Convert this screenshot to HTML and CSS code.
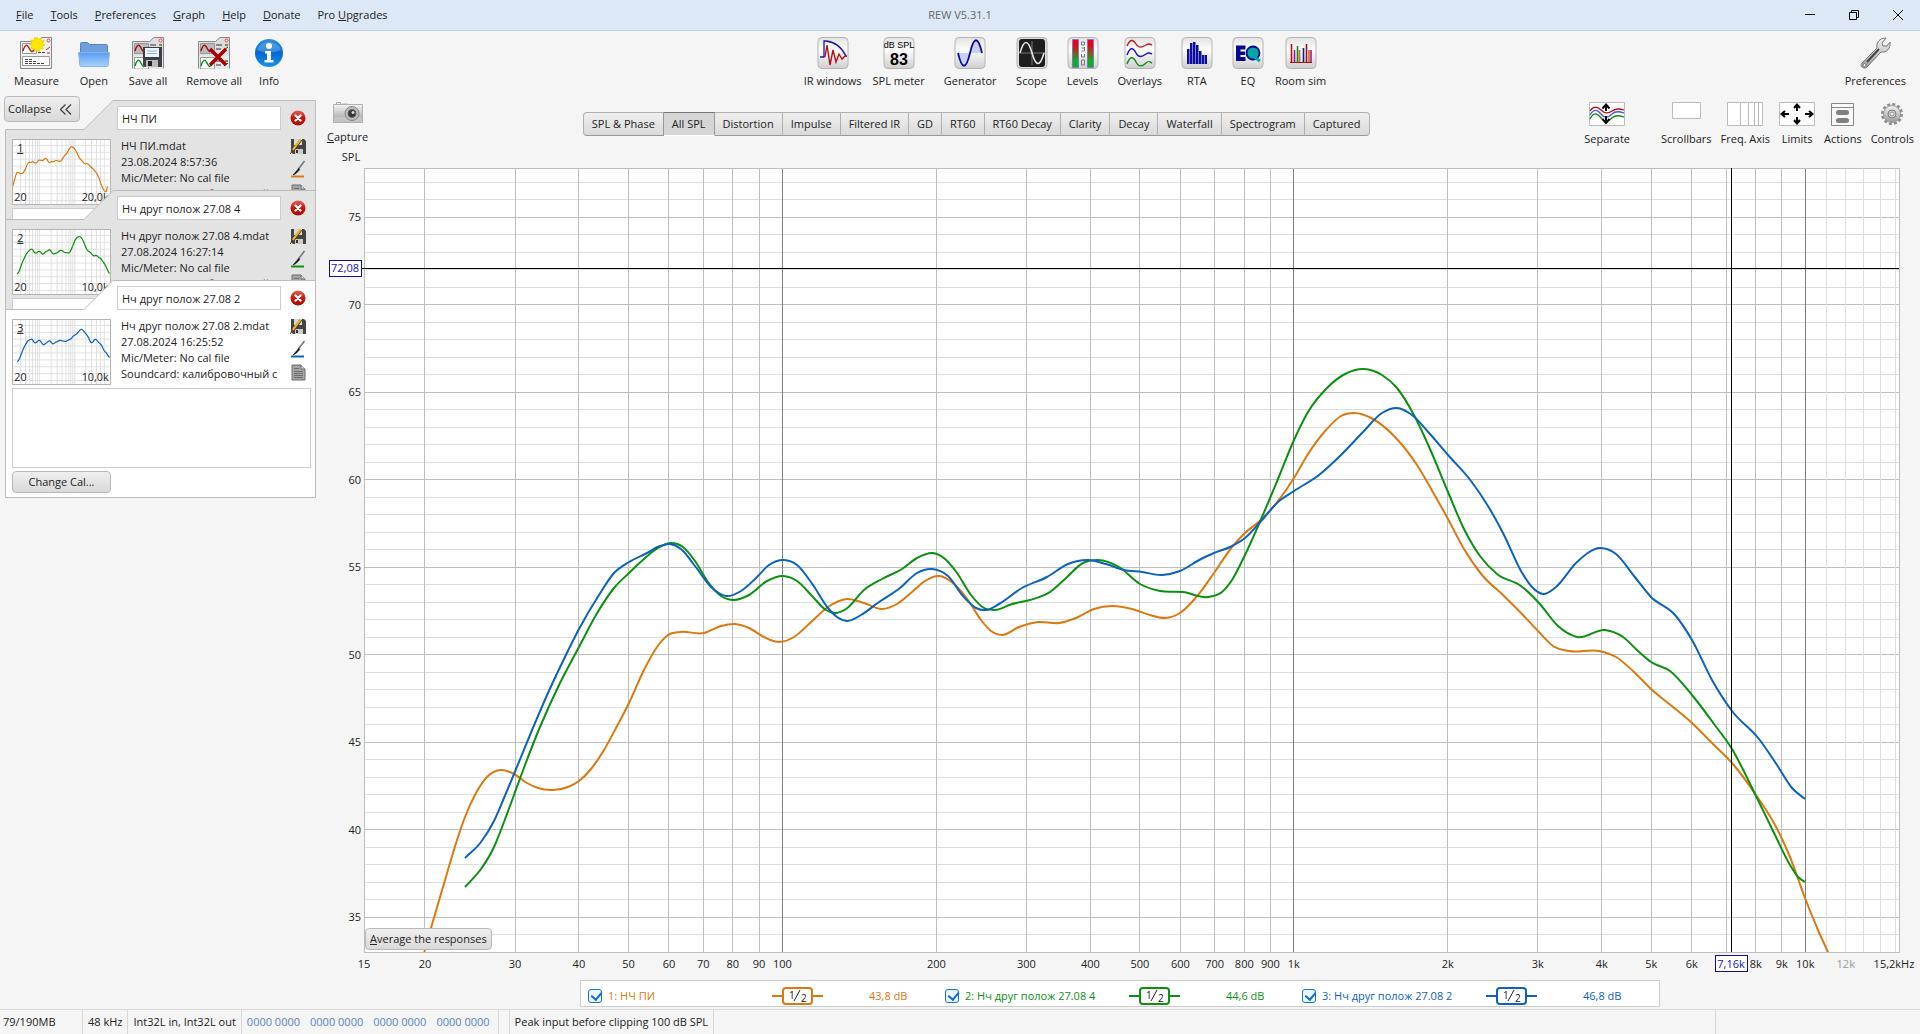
FILE: index.html
```html
<!DOCTYPE html>
<html lang="en">
  <head>
    <meta charset="UTF-8">
    <link rel="stylesheet" href="styles.css">
    <title>REW V5.31.1</title>
  </head>
  <body>
    <svg class="defs" aria-hidden="true">
      <defs>
        <linearGradient id="tile" x1="0" y1="0" x2="0" y2="1"><stop offset="0" stop-color="#e2e2e2"/><stop offset=".4" stop-color="#fdfdfd"/><stop offset="1" stop-color="#cfcfcf"/></linearGradient>
        <linearGradient id="level" x1="0" y1="0" x2="0" y2="1"><stop offset=".2" stop-color="#f00010"/><stop offset=".75" stop-color="#0fae20"/></linearGradient>
        <linearGradient id="folder" x1="0" y1="0" x2="0" y2="1"><stop offset="0" stop-color="#5b9cf0"/><stop offset="1" stop-color="#a9d2ff"/></linearGradient>
        <linearGradient id="info" x1="0" y1="0" x2="0" y2="1"><stop offset="0" stop-color="#2f8de0"/><stop offset=".5" stop-color="#0568cf"/><stop offset="1" stop-color="#1592f0"/></linearGradient>
        <linearGradient id="steel" x1="0" y1="0" x2="0" y2="1"><stop offset="0" stop-color="#f4f4f4"/><stop offset="1" stop-color="#9a9a9a"/></linearGradient>
        <linearGradient id="redball" x1="0" y1="0" x2="0" y2="1"><stop offset="0" stop-color="#e4635a"/><stop offset=".5" stop-color="#c81408"/><stop offset="1" stop-color="#a50d05"/></linearGradient>
        <symbol id="i-sheets" viewBox="0 0 32 32">
          <path d="M.5 31.5V4.500h17L22 .5h9.500v31" fill="#ddd" stroke="#888"/>
          <path d="M2.500 6.500h14v10h-14z" fill="#bbb" stroke="#999"/>
          <path d="M3 14c2-7 4-7 6-3s3 5 5 1" fill="none" stroke="#a00a14" stroke-width="1.500"/>
          <path d="M1 18.500h30V32H1z" fill="#e8e8e8"/>
          <path d="M2.500 20.500h14V32h-14z" fill="#fff" stroke="#999"/>
          <path d="M3 29c2-7 4-7 6-3s3 5 5 1" fill="none" stroke="#0a8a28" stroke-width="1.500"/>
          <path d="M18 8h6M18 12h5M18 24h6M18 28h5" stroke="#333"/>
          <circle cx="28.500" cy="3.500" r="1.500" fill="#fff" stroke="#e33"/><path d="M27 7h3v2h-3zM27 23h3v2h-3z" fill="#883" />
          <path d="M26 13l4-3M26 29l4-3" stroke="#333"/>
        </symbol>
        <symbol id="i-close" viewBox="0 0 16 16">
          <circle cx="8" cy="8" r="7.500" fill="url(#redball)"/>
          <path d="M5.500 5.500l5 5M10.500 5.500l-5 5" stroke="#fff" stroke-width="2.400" stroke-linecap="round"/>
        </symbol>
        <symbol id="i-save" viewBox="0 0 16 16">
          <path d="M1 1h13l2 2v13H3l-2-2z" fill="#444"/><path d="M4 1h8v6H4z" fill="#d8d8d8"/><path d="M5 11h8v5H5z" fill="#ccc"/><path d="M6 12h2v3H6z" fill="#333"/>
          <path d="M10.500 1.500L3 12" stroke="#e0b030" stroke-width="2.400"/><path d="M12 2L4 13M3 12l-3 4" stroke="#5a3a08"/>
        </symbol>
        <symbol id="i-brush" viewBox="0 0 16 18">
          <path d="M14.500 1L8 9.500" stroke="#777" stroke-width="1.600"/><path d="M8.700 8.500L3 15l3-1.500 3.800-4z" fill="#111" stroke="#111" stroke-width=".6"/>
          <path d="M1 15.500h13v2H1z" fill="currentColor"/>
        </symbol>
        <symbol id="i-doc" viewBox="0 0 15 17">
          <path d="M1 1h9l4 4v11H1z" fill="#a6a6a6" stroke="#6c6c6c"/><path d="M10 1v4h4" fill="#ddd" stroke="#6c6c6c"/>
          <path d="M3 4.500h5M3 7.500h9M3 9.500h9M3 11.500h9M3 13.500h9" stroke="#6c6c6c"/>
        </symbol>
      </defs>
    </svg>

    <header class="titlebar">
      <nav class="menu">
        <button><u>F</u>ile</button>
        <button><u>T</u>ools</button>
        <button><u>P</u>references</button>
        <button><u>G</u>raph</button>
        <button><u>H</u>elp</button>
        <button><u>D</u>onate</button>
        <button>Pro <u>U</u>pgrades</button>
      </nav>
      <span class="title">REW V5.31.1</span>
      <div class="window-buttons">
        <button aria-label="Minimize"><svg width="12" height="12" viewBox="0 0 12 12"><path d="M1 5.500h10"/></svg></button>
        <button aria-label="Restore"><svg width="12" height="12" viewBox="0 0 12 12"><path d="M1.500 3.500h7v7h-7zM3.500 3V1.500h7v7H9"/></svg></button>
        <button aria-label="Close"><svg width="12" height="12" viewBox="0 0 12 12"><path d="M1 1l10 10M11 1L1 11"/></svg></button>
      </div>
    </header>

    <div class="toolbar">
      <div class="tools">
        <button class="tool">
          <svg viewBox="0 0 32 32"><path d="M.5 31.500V4.500h17L22 .5h9.500v31z" fill="#f2f2f2" stroke="#888"/><path d="M2.500 6.500h14v10h-14zM2.500 19.500h27v9h-27z" fill="#fff" stroke="#999"/><path d="M3 14c2-7 4-7 6-3s3 5 6 1" fill="none" stroke="#c0141c" stroke-width="1.500"/><path d="M5 22.500h8M5 24.500h12M5 26.500h19M18 15.500h7" stroke="#444" stroke-dasharray="3 1"/><circle cx="28.500" cy="3.500" r="1.500" fill="#fff" stroke="#e33"/><path d="M26 13l4-3M27 16h3" stroke="#a33"/><path d="M16.500 0l1.500 2.500 3-1.500v3l3-.5-1.500 3 2 1.500-2.500 1 1 3-3-.5-.500 3-2.500-2-2 2-1-3-3 .5 1-3-2.500-1.500 2.500-1.500-1-3 3 .5.500-3 2 1.500z" fill="#ffe800" stroke="#f7d000"/></svg>
          <span>Measure</span>
        </button>
        <button class="tool">
          <svg viewBox="0 0 32 32"><path d="M2.500 16V6.500q0-1 1-1h6l2 2h17q1 0 1 1V16z" fill="#6f9fdc" stroke="#5585c8"/><path d="M.5 15.500h31l-1.500 13q0 1-1 1H3q-1 0-1-1z" fill="url(#folder)" stroke="#7fb2f2"/></svg>
          <span>Open</span>
        </button>
        <button class="tool">
          <svg viewBox="0 0 32 32"><use href="#i-sheets"/><path d="M11 10h18l1 1v19H13l-2-2z" fill="#3c3f45"/><path d="M13 11h14v9H13z" fill="#eef4fc"/><path d="M15 14h10M15 16.500h10" stroke="#8fb4e0"/><path d="M14 23h12v7H14z" fill="#bbb"/><path d="M16 24h4v5h-4z" fill="#222"/></svg>
          <span>Save all</span>
        </button>
        <button class="tool">
          <svg viewBox="0 0 32 32"><use href="#i-sheets"/><path d="M12 12l16 16M28 12L12 28" stroke="#a80008" stroke-width="3.500"/></svg>
          <span>Remove all</span>
        </button>
        <button class="tool tool-last">
          <svg viewBox="0 0 32 32"><circle cx="16" cy="16" r="14" fill="url(#info)"/><path d="M4 13a12.500 11 0 0 1 24 0q-12 5-24 0z" fill="#fff" opacity=".2"/><circle cx="16" cy="9" r="3" fill="#fff"/><path d="M12 14h6v9h2.500v2.500h-9V23H14v-6.500h-2z" fill="#fff"/></svg>
          <span>Info</span>
        </button>
      </div>

      <div class="tools">
        <button class="tool tool-first">
          <svg viewBox="0 0 32 32"><rect x="1" y=".5" width="30" height="31" rx="4" fill="url(#tile)" stroke="#b4b4b4"/><path d="M3 20h4V4h2c10 1 16 7 20 15v1" fill="none" stroke="#1818b0" stroke-width="1.300"/><path d="M8 20l2-12 3 20 3-15 3 12 3-8 3 5 3-3h2" fill="none" stroke="#b01018" stroke-width="1.400"/></svg>
          <span>IR windows</span>
        </button>
        <button class="tool">
          <svg viewBox="0 0 32 32"><rect x="1" y=".5" width="30" height="31" rx="4" fill="url(#tile)" stroke="#b4b4b4"/><text x="16" y="11" class="t-small">dB SPL</text><text x="16" y="28" class="t-big">83</text></svg>
          <span>SPL meter</span>
        </button>
        <button class="tool">
          <svg viewBox="0 0 32 32"><rect x="1" y=".5" width="30" height="31" rx="4" fill="url(#tile)" stroke="#b4b4b4"/><path d="M4 16h12c-4 17-8 17-12 0zM16 16h12c-4-17-8-17-12 0z" fill="#ccd0f0"/><path d="M4 16c4 17 8 17 12 0s8-17 12 0" fill="none" stroke="#0c0c9c" stroke-width="1.800"/></svg>
          <span>Generator</span>
        </button>
        <button class="tool">
          <svg viewBox="0 0 32 32"><rect x="1" y=".5" width="30" height="31" rx="4" fill="#ddd" stroke="#b4b4b4"/><rect x="3" y="2" width="26" height="28" rx="3" fill="#1e1e1e"/><path d="M3 16h26M16 4v24" stroke="#777"/><path d="M4 16c4-14 8-14 12 0s8 14 12 0" fill="none" stroke="#e4e4e4" stroke-width="1.600"/></svg>
          <span>Scope</span>
        </button>
        <button class="tool">
          <svg viewBox="0 0 32 32"><rect x="1" y=".5" width="30" height="31" rx="4" fill="url(#tile)" stroke="#b4b4b4"/><path d="M5.500 2.500h6v28h-6zM20.500 2.500h6v28h-6z" fill="url(#level)" stroke="#7a7ac8"/><path d="M14.500 5h3v3h-3zM14.500 11h3M17.500 10v4h-3M14.500 17v3h3v-3M14.500 23h3v5h-3z" fill="none" stroke="#777"/></svg>
          <span>Levels</span>
        </button>
        <button class="tool">
          <svg viewBox="0 0 32 32"><rect x="1" y=".5" width="30" height="31" rx="4" fill="url(#tile)" stroke="#b4b4b4"/><g fill="none" stroke-width="1.400"><path d="M3 9c3-7 6-7 9-2s7 3 10 1 4-1 6 0" stroke="#c01820"/><path d="M3 18c3-8 6-8 9-2s7 3 10 1 4-1 6 0" stroke="#1818b0"/><path d="M3 27c3-8 6-8 9-2s7 4 10 1 4-1 6 0" stroke="#108c18"/></g></svg>
          <span>Overlays</span>
        </button>
        <button class="tool">
          <svg viewBox="0 0 32 32"><rect x="1" y=".5" width="30" height="31" rx="4" fill="url(#tile)" stroke="#b4b4b4"/><path d="M6 12h2.500v15H6zM9 6h2.500v21H9zM12 5h2.500v22H12zM15 8h2.500v19H15zM18 14h2.500v13H18zM21 18h2.500v9H21zM24 18h2v9h-2z" fill="#0c0ca0"/></svg>
          <span>RTA</span>
        </button>
        <button class="tool">
          <svg viewBox="0 0 32 32"><rect x="1" y=".5" width="30" height="31" rx="4" fill="url(#tile)" stroke="#b4b4b4"/><path d="M4 8.500h9.500v4H8.500v2h4.500v3.500H8.500v2h5v4H4z" fill="#08088c"/><circle cx="21" cy="16" r="6.500" fill="#00a8a8" stroke="#08088c" stroke-width="1.800"/><path d="M22 20l6 4" stroke="#00a8a8" stroke-width="3"/></svg>
          <span>EQ</span>
        </button>
        <button class="tool tool-last">
          <svg viewBox="0 0 32 32"><rect x="1" y=".5" width="30" height="31" rx="4" fill="url(#tile)" stroke="#b4b4b4"/><g stroke-width="1.600"><path d="M6.500 7v18" stroke="#b01018"/><path d="M9.500 13v12" stroke="#981a98"/><path d="M12.500 9v16" stroke="#108c18"/><path d="M14.500 13v12" stroke="#b87818"/><path d="M18.500 11v14" stroke="#1818b0"/><path d="M21.500 7v18" stroke="#a01018"/><path d="M24 13v12" stroke="#b87818"/><path d="M26 13v12" stroke="#981a98"/></g><path d="M5 25.500h22" stroke="#b01018"/></svg>
          <span>Room sim</span>
        </button>
      </div>

      <div class="tools tools-right">
        <button class="tool">
          <svg viewBox="0 0 32 32"><path d="M3 26L18 11C17 5 21 1 27 1l-4 5 1 3 4 0 3-4c1 7-4 11-9 10L8 30c-3 3-8-1-5-4z" fill="url(#steel)" stroke="#777"/><path d="M8 25L20 12" stroke="#444" stroke-width="2"/><circle cx="5.500" cy="28" r="1.500" fill="#f4f4f4" stroke="#777"/></svg>
          <span>Preferences</span>
        </button>
      </div>
    </div>

    <div class="workspace">
      <aside class="sidebar">
        <button class="push collapse">Collapse <svg width="12" height="11" viewBox="0 0 12 11"><path d="M5.500 .5l-5 5 5 5M11 .5l-5 5 5 5"/></svg></button>

        <section class="card card-1">
          <svg class="card-shape" preserveAspectRatio="none" viewBox="0 0 311 218"><path d="M.5 217.500V29.500H79L108 .5H310.500V217.500z"/></svg>
          <div class="card-head">
            <input type="text" aria-label="Measurement name" value="НЧ ПИ">
            <button aria-label="Remove"><svg width="16" height="16"><use href="#i-close"/></svg></button>
          </div>
          <div class="card-info">
            <svg class="thumb" viewBox="0 0 98 65" data-curve="0" data-from="20" data-to="20,0k" data-n="1"></svg>
            <p>НЧ ПИ.mdat<br>23.08.2024 8:57:36<br>Mic/Meter: No cal file<br>Soundcard: калибровочный с</p>
            <div class="card-icons">
              <button aria-label="Save"><svg width="16" height="16"><use href="#i-save"/></svg></button>
              <button aria-label="Colour" class="c1"><svg width="16" height="18"><use href="#i-brush"/></svg></button>
              <button aria-label="Notes"><svg width="15" height="17"><use href="#i-doc"/></svg></button>
            </div>
          </div>
          <textarea aria-label="Notes"></textarea>
          <button class="push change-cal">Change Cal...</button>
        </section>

        <section class="card card-2">
          <svg class="card-shape" preserveAspectRatio="none" viewBox="0 0 311 218"><path d="M.5 217.500V29.500H79L108 .5H310.500V217.500z"/></svg>
          <div class="card-head">
            <input type="text" aria-label="Measurement name" value="Нч друг полож 27.08 4">
            <button aria-label="Remove"><svg width="16" height="16"><use href="#i-close"/></svg></button>
          </div>
          <div class="card-info">
            <svg class="thumb" viewBox="0 0 98 65" data-curve="1" data-from="20" data-to="10,0k" data-n="2"></svg>
            <p>Нч друг полож 27.08 4.mdat<br>27.08.2024 16:27:14<br>Mic/Meter: No cal file<br>Soundcard: калибровочный с</p>
            <div class="card-icons">
              <button aria-label="Save"><svg width="16" height="16"><use href="#i-save"/></svg></button>
              <button aria-label="Colour" class="c2"><svg width="16" height="18"><use href="#i-brush"/></svg></button>
              <button aria-label="Notes"><svg width="15" height="17"><use href="#i-doc"/></svg></button>
            </div>
          </div>
          <textarea aria-label="Notes"></textarea>
          <button class="push change-cal">Change Cal...</button>
        </section>

        <section class="card card-3 selected">
          <svg class="card-shape" preserveAspectRatio="none" viewBox="0 0 311 218"><path d="M.5 217.500V29.500H79L108 .5H310.500V217.500z"/></svg>
          <div class="card-head">
            <input type="text" aria-label="Measurement name" value="Нч друг полож 27.08 2">
            <button aria-label="Remove"><svg width="16" height="16"><use href="#i-close"/></svg></button>
          </div>
          <div class="card-info">
            <svg class="thumb" viewBox="0 0 98 65" data-curve="2" data-from="20" data-to="10,0k" data-n="3"></svg>
            <p>Нч друг полож 27.08 2.mdat<br>27.08.2024 16:25:52<br>Mic/Meter: No cal file<br>Soundcard: калибровочный с</p>
            <div class="card-icons">
              <button aria-label="Save"><svg width="16" height="16"><use href="#i-save"/></svg></button>
              <button aria-label="Colour" class="c3"><svg width="16" height="18"><use href="#i-brush"/></svg></button>
              <button aria-label="Notes"><svg width="15" height="17"><use href="#i-doc"/></svg></button>
            </div>
          </div>
          <textarea aria-label="Notes"></textarea>
          <button class="push change-cal">Change Cal...</button>
        </section>
      </aside>

      <main class="graph">
        <div class="graph-head">
          <div class="capture-col">
            <button class="capture">
              <svg width="30" height="22" viewBox="0 0 30 22"><path d="M3.500 2V.5h4V2M9.500 2h5" fill="none" stroke="#aaa"/><path d="M.5 2.500h29v18H.5z" fill="url(#steel)" stroke="#b0b0b0"/><path d="M1 15h28v5H1z" fill="#c4c4c4"/><circle cx="19" cy="11.500" r="7" fill="#bbb" stroke="#888"/><circle cx="19" cy="11.500" r="4" fill="#333" stroke="#666"/><circle cx="20" cy="10.500" r="1.500" fill="#ddd"/></svg>
              <span><u>C</u>apture</span>
            </button>
            <span class="spl">SPL</span>
          </div>
          <div class="tabs">
            <button>SPL &amp; Phase</button>
            <button class="active">All SPL</button>
            <button>Distortion</button>
            <button>Impulse</button>
            <button>Filtered IR</button>
            <button>GD</button>
            <button>RT60</button>
            <button>RT60 Decay</button>
            <button>Clarity</button>
            <button>Decay</button>
            <button>Waterfall</button>
            <button>Spectrogram</button>
            <button>Captured</button>
          </div>
          <div class="graph-tools">
            <button class="separate">
              <svg width="36" height="24" viewBox="0 0 36 24"><path d="M.5 .5h35v23H.5z" fill="#fff" stroke="#bbb"/><g fill="none" stroke-width="1.300"><path d="M1 9c4-6 8-4 11-1s7 4 11 1 9-2 12-1" stroke="#b01018"/><path d="M1 13c4-7 8-5 11-1s7 4 11 0 9-2 12-1" stroke="#5a50c8"/><path d="M1 17c4-8 8-5 11-1s7 4 11 0 9-2 12-1" stroke="#108c18"/></g><path d="M17 9V3M13.500 6.500L17 2.500l3.500 4M17 14v6M13.500 17l3.500 4 3.500-4" fill="none" stroke="#000" stroke-width="2"/></svg>
              <span>Separate</span>
            </button>
            <button>
              <svg width="29" height="24" viewBox="0 0 29 24"><path d="M.5 .5h28v16H.5z" fill="#fff" stroke="#bbb"/></svg>
              <span>Scrollbars</span>
            </button>
            <button>
              <svg width="36" height="24" viewBox="0 0 36 24"><path d="M.5 .5h35v23H.5z" fill="#fff" stroke="#bbb"/><path d="M13.500 1v22M21.500 1v22M27.500 1v22M31.500 1v22" stroke="#bbb"/></svg>
              <span>Freq. Axis</span>
            </button>
            <button>
              <svg width="36" height="24" viewBox="0 0 36 24"><path d="M.5 .5h35v23H.5z" fill="#fff" stroke="#bbb"/><path d="M18 9V3M15 6l3-3.500L21 6M18 15v6M15 18l3 3.500 3-3.500M10 12H3M6 9l-3.500 3L6 15M26 12h7M30 9l3.500 3-3.500 3" fill="none" stroke="#000" stroke-width="2"/></svg>
              <span>Limits</span>
            </button>
            <button>
              <svg width="24" height="24" viewBox="0 0 24 24"><path d="M.5 1.500h22v22H.5zM.5 5.500h22" fill="#f8f8f8" stroke="#888"/><rect x="5" y="8" width="13" height="5" rx="2.500" fill="#808080"/><rect x="5" y="16" width="13" height="5" rx="2.500" fill="#808080"/></svg>
              <span>Actions</span>
            </button>
            <button>
              <svg width="24" height="24" viewBox="0 0 24 24"><circle cx="12" cy="12" r="9.500" fill="none" stroke="#8c8c8c" stroke-width="3" stroke-dasharray="2.900 2.070"/><circle cx="12" cy="12" r="8.500" fill="url(#steel)" stroke="#999"/><circle cx="12" cy="12" r="4" fill="#ddd" stroke="#777"/><circle cx="12" cy="12" r="2" fill="#f4f4f4" stroke="#888"/></svg>
              <span>Controls</span>
            </button>
          </div>
        </div>

        <div class="plot">
          <svg id="plot"></svg>
          <button class="push average"><u>A</u>verage the responses</button>
        </div>

        <div class="legend">
          <div class="legend-item c1">
            <input type="checkbox" id="trace1" checked>
            <label for="trace1">1: НЧ ПИ</label>
            <svg class="smoothing" viewBox="0 0 51 18"><path d="M0 9h11M40 9h11"/><rect x="11" y="1" width="29" height="16" rx="3"/><text x="17" y="12">1</text><path class="slash" d="M22 14l6-11"/><text x="29" y="15">2</text></svg>
            <output>43,8 dB</output>
          </div>
          <div class="legend-item c2">
            <input type="checkbox" id="trace2" checked>
            <label for="trace2">2: Нч друг полож 27.08 4</label>
            <svg class="smoothing" viewBox="0 0 51 18"><path d="M0 9h11M40 9h11"/><rect x="11" y="1" width="29" height="16" rx="3"/><text x="17" y="12">1</text><path class="slash" d="M22 14l6-11"/><text x="29" y="15">2</text></svg>
            <output>44,6 dB</output>
          </div>
          <div class="legend-item c3">
            <input type="checkbox" id="trace3" checked>
            <label for="trace3">3: Нч друг полож 27.08 2</label>
            <svg class="smoothing" viewBox="0 0 51 18"><path d="M0 9h11M40 9h11"/><rect x="11" y="1" width="29" height="16" rx="3"/><text x="17" y="12">1</text><path class="slash" d="M22 14l6-11"/><text x="29" y="15">2</text></svg>
            <output>46,8 dB</output>
          </div>
        </div>
      </main>
    </div>

    <footer class="statusbar">
      <span class="memory">79/190MB</span>
      <span>48 kHz</span>
      <span>Int32L in, Int32L out</span>
      <span class="bits"><i>0000 0000</i><i>0000 0000</i><i>0000 0000</i><i>0000 0000</i></span>
      <span class="spacer"></span>
      <span>Peak input before clipping 100 dB SPL</span>
      <span class="rest"></span>
      <span class="end"></span>
    </footer>

    <script src="script.js"></script>
  </body>
</html>
```
FILE: styles.css
```css
* {
    box-sizing: border-box;
}

body {
    margin: 0;
    min-height: 100vh;
    display: flex;
    flex-direction: column;
    background: #f5f5f5;
    color: #222;
    font: 11px/16px "Open Sans", "Noto Sans", sans-serif;
}

button {
    font: inherit;
    color: inherit;
    background: none;
    border: none;
    padding: 0;
    white-space: nowrap;
}

svg {
    display: block;
}

.defs {
    position: absolute;
    width: 0;
    height: 0;
}

.c1 { color: #dc7810; }
.c2 { color: #0c9010; }
.c3 { color: #0c62bc; }

/* title bar */
.titlebar {
    display: grid;
    grid-template-columns: 1fr auto 1fr;
    align-items: center;
    height: 31px;
    background: #dce8f6;
    border-bottom: 1px solid #c0d0e0;
}

.menu {
    display: flex;
    gap: 17px;
    padding-left: 16px;
}

.title {
    color: #666;
}

.window-buttons {
    display: flex;
    justify-content: flex-end;
    gap: 32px;
    padding-right: 16px;
}

.window-buttons path {
    fill: none;
    stroke: #000;
}

/* toolbar */
.toolbar {
    display: flex;
    justify-content: space-between;
    height: 65px;
    padding: 6px 14px 0;
}

.tools {
    display: flex;
    align-items: flex-start;
    gap: 19px;
}

.tool {
    display: flex;
    flex-direction: column;
    align-items: center;
    gap: 4px;
}

.tool svg {
    width: 32px;
    height: 32px;
}

.tool-first {
    margin-right: -8px;
}

.tool-last {
    margin-left: -8px;
}

.t-small,
.t-big {
    font-family: "Liberation Sans", sans-serif;
    font-size: 9px;
    text-anchor: middle;
}

.t-big {
    font-size: 16px;
    font-weight: bold;
}

.push {
    background: linear-gradient(#efefef, #d9d9d9);
    border: 1px solid #b9b9b9;
    border-radius: 4px;
}

.workspace {
    flex: 1;
    display: flex;
}

/* measurement list */
.sidebar {
    width: 320px;
    padding-left: 4px;
}

.collapse {
    position: relative;
    z-index: 1;
    display: flex;
    align-items: center;
    gap: 9px;
    height: 26px;
    padding: 0 7px 0 3px;
}

.collapse path {
    fill: none;
    stroke: #444;
    stroke-width: 1.300;
}

.card {
    position: relative;
    width: 311px;
    height: 218px;
    margin: -128px 0 0 1px;
}

.card-1 {
    margin-top: -22px;
}

.card-shape {
    position: absolute;
    width: 100%;
    height: 100%;
    fill: #e3e3e3;
    stroke: #bcbcbc;
}

.selected .card-shape {
    fill: #fff;
}

.card-head,
.card-info,
.card textarea,
.change-cal {
    position: relative;
}

.card-head {
    display: flex;
    align-items: center;
    gap: 9px;
    padding: 6px 0 0 112px;
}

.card-head input {
    width: 164px;
    height: 24px;
    padding: 0 4px;
    border: 1px solid #ccc;
    background: #fff;
    color: #222;
    font: inherit;
}

.card-info {
    display: grid;
    grid-template-columns: 99px 158px 18px;
    gap: 10px;
    height: 78px;
    padding: 8px 7px 0;
}

.thumb {
    width: 99px;
    height: 66px;
    margin-top: 1px;
    border: 1px solid #b4b4b4;
    background: #fff;
}

.thumb path {
    fill: none;
    stroke: #e0e0e0;
}

.thumb .curve {
    stroke: currentColor;
    stroke-width: 1.200;
}

.thumb text {
    fill: #222;
    font-size: 11px;
}

.card-info p {
    margin: 0;
    overflow: hidden;
    white-space: nowrap;
}

.card-icons {
    display: flex;
    flex-direction: column;
    align-items: center;
    gap: 6px;
}

.card textarea {
    display: block;
    width: 299px;
    height: 80px;
    margin-left: 7px;
    border: 1px solid #ccc;
    background: #fff;
    resize: none;
}

.change-cal {
    display: block;
    width: 99px;
    height: 22px;
    margin: 3px 0 0 7px;
}

/* graph */
.graph {
    flex: 1;
    display: flex;
    flex-direction: column;
    min-width: 0;
}

.graph-head {
    display: flex;
    height: 72px;
    padding: 6px 6px 0 7px;
}

.capture-col,
.capture {
    display: flex;
    flex-direction: column;
    align-items: center;
}

.capture {
    gap: 5px;
}

.spl {
    align-self: flex-end;
    margin-top: 4px;
    padding-right: 8px;
}

.tabs {
    flex: 1;
    display: flex;
    justify-content: center;
    align-items: flex-start;
    padding-top: 10px;
}

.tabs button {
    height: 24px;
    padding: 0 8px;
    background: linear-gradient(#efefef, #dadada);
    border: 1px solid #b0b0b0;
    border-left-width: 0;
    border-bottom-color: #999;
}

.tabs button:first-child {
    border-left-width: 1px;
    border-radius: 4px 0 0 4px;
}

.tabs button:last-child {
    border-radius: 0 4px 4px 0;
}

.tabs .active {
    background: #d6d6d6;
    border-color: #777 #999 #fff;
    box-shadow: -1px 0 #999;
}

.graph-tools {
    display: flex;
    align-items: flex-start;
    gap: 9px;
}

.graph-tools button {
    display: flex;
    flex-direction: column;
    align-items: center;
    gap: 5px;
}

.graph-tools .separate {
    margin-right: 22px;
}

.plot {
    position: relative;
    flex: 1;
    margin: 0 21px 28px 44px;
    background: #fff;
}

.plot > svg {
    position: absolute;
    width: 100%;
    height: 100%;
    overflow: visible;
}

.plot text {
    fill: #222;
    font-size: 11px;
    text-anchor: middle;
}

.plot .y-label {
    text-anchor: end;
}

.plot .dim {
    fill: #999;
}

.plot .cursor-text {
    fill: #1414c0;
}

.grid {
    stroke: #bebebe;
    shape-rendering: crispEdges;
}

.grid.minor {
    stroke: #dedede;
}

.grid.decade {
    stroke: #808080;
}

.cursor {
    stroke: #000;
    shape-rendering: crispEdges;
}

.frame {
    fill: none;
    stroke: #bebebe;
    shape-rendering: crispEdges;
}

.cursor-box {
    fill: #fff;
    stroke: #1010a0;
    shape-rendering: crispEdges;
}

.plot .curve {
    fill: none;
    stroke: currentColor;
    stroke-width: 2;
    vector-effect: non-scaling-stroke;
}

.average {
    position: absolute;
    left: 1px;
    bottom: 2px;
    height: 22px;
    padding: 0 4px;
}

/* legend */
.legend {
    align-self: center;
    display: grid;
    grid-template-columns: repeat(3, 357px);
    height: 27px;
    margin-bottom: 2px;
    padding: 4px 0 0 7px;
    background: #fff;
    border: 1px solid #ccc;
}

.legend-item {
    display: grid;
    grid-template-columns: 14px 158px 51px 1fr;
    align-items: center;
    column-gap: 6px;
}

.legend-item input {
    appearance: none;
    width: 14px;
    height: 14px;
    margin: 0;
    border: 1px solid #1474d0;
    border-radius: 3px;
    background: #eef6ff;
}

.legend-item input:checked::before {
    content: "";
    display: block;
    width: 5px;
    height: 8px;
    margin: 0 0 0 4px;
    border: solid #0c6cd0;
    border-width: 0 2px 2px 0;
    transform: rotate(40deg);
}

.legend-item output {
    padding-left: 40px;
}

.smoothing {
    width: 51px;
    height: 18px;
    fill: none;
    stroke: currentColor;
    stroke-width: 2;
}

.smoothing text {
    fill: #222;
    stroke: none;
    font-size: 10px;
}

.smoothing .slash {
    stroke: #222;
    stroke-width: 1;
}

/* status bar */
.statusbar {
    display: flex;
    height: 25px;
    border-top: 1px solid #d8d8d8;
    line-height: 24px;
}

.statusbar span {
    padding: 0 5px;
    border-right: 1px solid #d8d8d8;
    white-space: nowrap;
}

.statusbar .memory {
    width: 83px;
    padding-left: 3px;
}

.statusbar .bits {
    display: flex;
    gap: 10px;
    padding-right: 8px;
    color: #5b82c4;
}

.bits i {
    font-style: normal;
}

.statusbar .rest {
    flex: 1;
}

.statusbar .end {
    width: 204px;
    border: none;
}
```
FILE: script.js
```js
const SVG = "http://www.w3.org/2000/svg";
const FMIN = 15.2, FMAX = 15250, DBMAX = 77.82, DBMIN = 33.02;
const W = 1535, H = 784;

// trace points on a 1535 x 784 canvas
const traces = [
  [[56,800],[67,760],[79,719],[94,669],[101,649],[112,625],[124,608],[137,602],[150,606],[163,615],[174,620],[189,622],[204,619],[215,613],[227,601],[240,582],[252,560],[265,535],[280,502],[293,479],[304,467],[316,464],[340,465],[357,458],[371,456],[385,460],[400,469],[415,474],[430,469],[446,455],[464,439],[483,431],[500,435],[518,441],[533,436],[548,424],[561,413],[575,408],[589,415],[604,432],[617,452],[627,463],[638,467],[655,459],[674,454],[695,455],[712,450],[730,441],[748,438],[768,441],[786,447],[801,450],[816,445],[834,427],[850,405],[868,379],[881,365],[898,351],[914,333],[930,310],[944,286],[962,262],[977,248],[990,245],[1009,251],[1031,269],[1053,297],[1070,326],[1084,351],[1100,381],[1118,407],[1140,428],[1157,445],[1175,464],[1189,478],[1205,483],[1235,483],[1252,489],[1270,504],[1287,521],[1309,539],[1328,555],[1348,575],[1368,595],[1392,627],[1411,657],[1426,689],[1441,730],[1454,762],[1464,784],[1498,850],[1520,870],[1540,868],[1556,800]],
  [[101,719],[117,701],[130,679],[140,654],[150,627],[161,597],[176,559],[196,515],[215,479],[232,447],[250,420],[265,405],[280,391],[294,380],[307,375],[319,379],[331,393],[344,414],[357,428],[370,432],[385,427],[403,413],[419,408],[433,413],[449,429],[462,442],[472,445],[482,441],[500,422],[518,411],[538,401],[553,390],[569,385],[581,391],[593,405],[607,427],[620,440],[631,442],[648,436],[666,432],[686,424],[701,411],[719,395],[734,392],[755,399],[776,416],[796,423],[819,424],[844,429],[858,424],[868,412],[881,387],[898,349],[914,311],[930,272],[944,244],[962,221],[981,206],[1000,201],[1018,207],[1033,220],[1051,249],[1066,281],[1084,324],[1100,361],[1116,388],[1133,406],[1157,418],[1175,435],[1194,458],[1213,469],[1241,462],[1259,469],[1274,483],[1287,494],[1306,503],[1328,527],[1350,556],[1368,581],[1392,628],[1411,667],[1426,697],[1434,709],[1441,714]],
  [[101,690],[117,674],[130,653],[140,630],[150,606],[166,567],[184,525],[199,493],[215,461],[235,427],[250,405],[265,394],[283,385],[296,378],[306,376],[317,381],[331,398],[347,419],[362,428],[377,423],[393,409],[405,397],[420,392],[433,397],[449,417],[464,440],[473,449],[483,453],[497,447],[515,434],[536,420],[553,405],[568,401],[584,408],[599,428],[612,440],[622,442],[635,436],[658,420],[683,409],[704,396],[724,392],[742,396],[760,402],[778,404],[798,407],[816,403],[837,391],[850,385],[866,379],[881,370],[898,352],[914,334],[930,323],[955,307],[977,287],[999,264],[1018,245],[1033,240],[1048,247],[1066,266],[1084,287],[1107,313],[1124,338],[1140,367],[1157,403],[1168,419],[1179,426],[1192,419],[1213,394],[1236,380],[1252,386],[1270,408],[1287,429],[1311,447],[1328,472],[1348,512],[1368,543],[1395,571],[1413,597],[1428,620],[1441,631]]
];

function add(parent, name, attrs, text) {
  const el = document.createElementNS(SVG, name);
  for (const key in attrs) el.setAttribute(key, attrs[key]);
  if (text) el.textContent = text;
  parent.appendChild(el);
  return el;
}

// cubic through the points, the slope at each one taken from its neighbours
function spline(p) {
  const seg = (i) => (p[i + 1][1] - p[i][1]) / (p[i + 1][0] - p[i][0]);
  const slope = p.map((_, i) => {
    if (i === 0) return seg(0);
    if (i === p.length - 1) return seg(i - 1);
    const h0 = p[i][0] - p[i - 1][0], h1 = p[i + 1][0] - p[i][0];
    return (h1 * seg(i - 1) + h0 * seg(i)) / (h0 + h1);
  });
  let d = `M${p[0]}`;
  for (let i = 0; i < p.length - 1; i++) {
    const [x0, y0] = p[i], [x1, y1] = p[i + 1], h = (x1 - x0) / 3;
    d += `C${x0 + h} ${y0 + slope[i] * h} ${x1 - h} ${y1 - slope[i + 1] * h} ${x1} ${y1}`;
  }
  return d;
}

const xPos = (f) => (Math.log(f / FMIN) / Math.log(FMAX / FMIN)) * 100 + "%";
const yPos = (db) => ((DBMAX - db) / (DBMAX - DBMIN)) * 100 + "%";

const plot = document.getElementById("plot");

for (let db = 34; db <= 77; db++) {
  add(plot, "line", { class: db % 5 ? "grid minor" : "grid", x1: 0, x2: "100%", y1: yPos(db), y2: yPos(db) });
  if (db % 5 === 0) add(plot, "text", { class: "y-label", x: -3, y: yPos(db), dy: 4 }, String(db));
}

for (const decade of [10, 100, 1000, 10000]) {
  for (let n = 1; n < 10; n++) {
    const f = n * decade;
    if (f < FMIN || f > FMAX) continue;
    add(plot, "line", { class: n === 1 ? "grid decade" : "grid", x1: xPos(f), x2: xPos(f), y1: 0, y2: "100%" });
    if (f !== 7000) add(plot, "text", { x: xPos(f), y: "100%", dy: 16 }, f < 1000 ? String(f) : f / 1000 + "k");
  }
}
for (let f = 11000; f <= 15000; f += 1000) {
  add(plot, "line", { class: "grid minor", x1: xPos(f), x2: xPos(f), y1: 0, y2: "100%" });
}
add(plot, "text", { x: 0, y: "100%", dy: 16 }, "15");
add(plot, "text", { class: "dim", x: xPos(12000), y: "100%", dy: 16 }, "12k");
add(plot, "text", { x: "100%", y: "100%", dx: -5, dy: 16 }, "15,2kHz");
add(plot, "rect", { class: "frame", width: "100%", height: "100%" });

const inner = add(plot, "svg", { width: "100%", height: "100%", viewBox: `0 0 ${W} ${H}`, preserveAspectRatio: "none" });
traces.forEach((points, i) => add(inner, "path", { class: `curve c${i + 1}`, d: spline(points) }));

// cursor
const cx = xPos(7160), cy = yPos(72.08);
add(plot, "line", { class: "cursor", x1: -3, x2: "100%", y1: cy, y2: cy });
add(plot, "line", { class: "cursor", x1: cx, x2: cx, y1: 0, y2: "100%" });
add(plot, "rect", { class: "cursor-box", x: -35, y: cy, width: 32, height: 16, transform: "translate(0 -8)" });
add(plot, "text", { class: "cursor-text", x: -19, y: cy, dy: 4 }, "72,08");
add(plot, "rect", { class: "cursor-box", x: cx, y: "100%", width: 32, height: 16, transform: "translate(-16 3)" });
add(plot, "text", { class: "cursor-text", x: cx, y: "100%", dy: 16 }, "7,16k");

// thumbnails
document.querySelectorAll(".thumb").forEach((thumb) => {
  const i = Number(thumb.dataset.curve);
  let d = "";
  for (let y = 5; y < 65; y += 7) d += `M0 ${y}.500H98`;
  for (const x of [7, 12, 16, 19, 22, 24, 26, 38, 44, 49, 53, 56, 58, 60, 62, 73, 79, 84, 88, 92]) d += `M${x}.500 0V65`;
  add(thumb, "path", { d });
  const scale = i === 0 ? "translate(-4 -11) scale(.064 .0727)" : "translate(-3 -8) scale(.07 .073)";
  add(thumb, "path", { class: `curve c${i + 1}`, d: spline(traces[i]), transform: scale, "vector-effect": "non-scaling-stroke" });
  add(thumb, "text", { x: 4, y: 12, "text-decoration": "underline" }, thumb.dataset.n);
  add(thumb, "text", { x: 1, y: 62 }, thumb.dataset.from);
  add(thumb, "text", { x: 97, y: 62, "text-anchor": "end" }, thumb.dataset.to);
});
```
